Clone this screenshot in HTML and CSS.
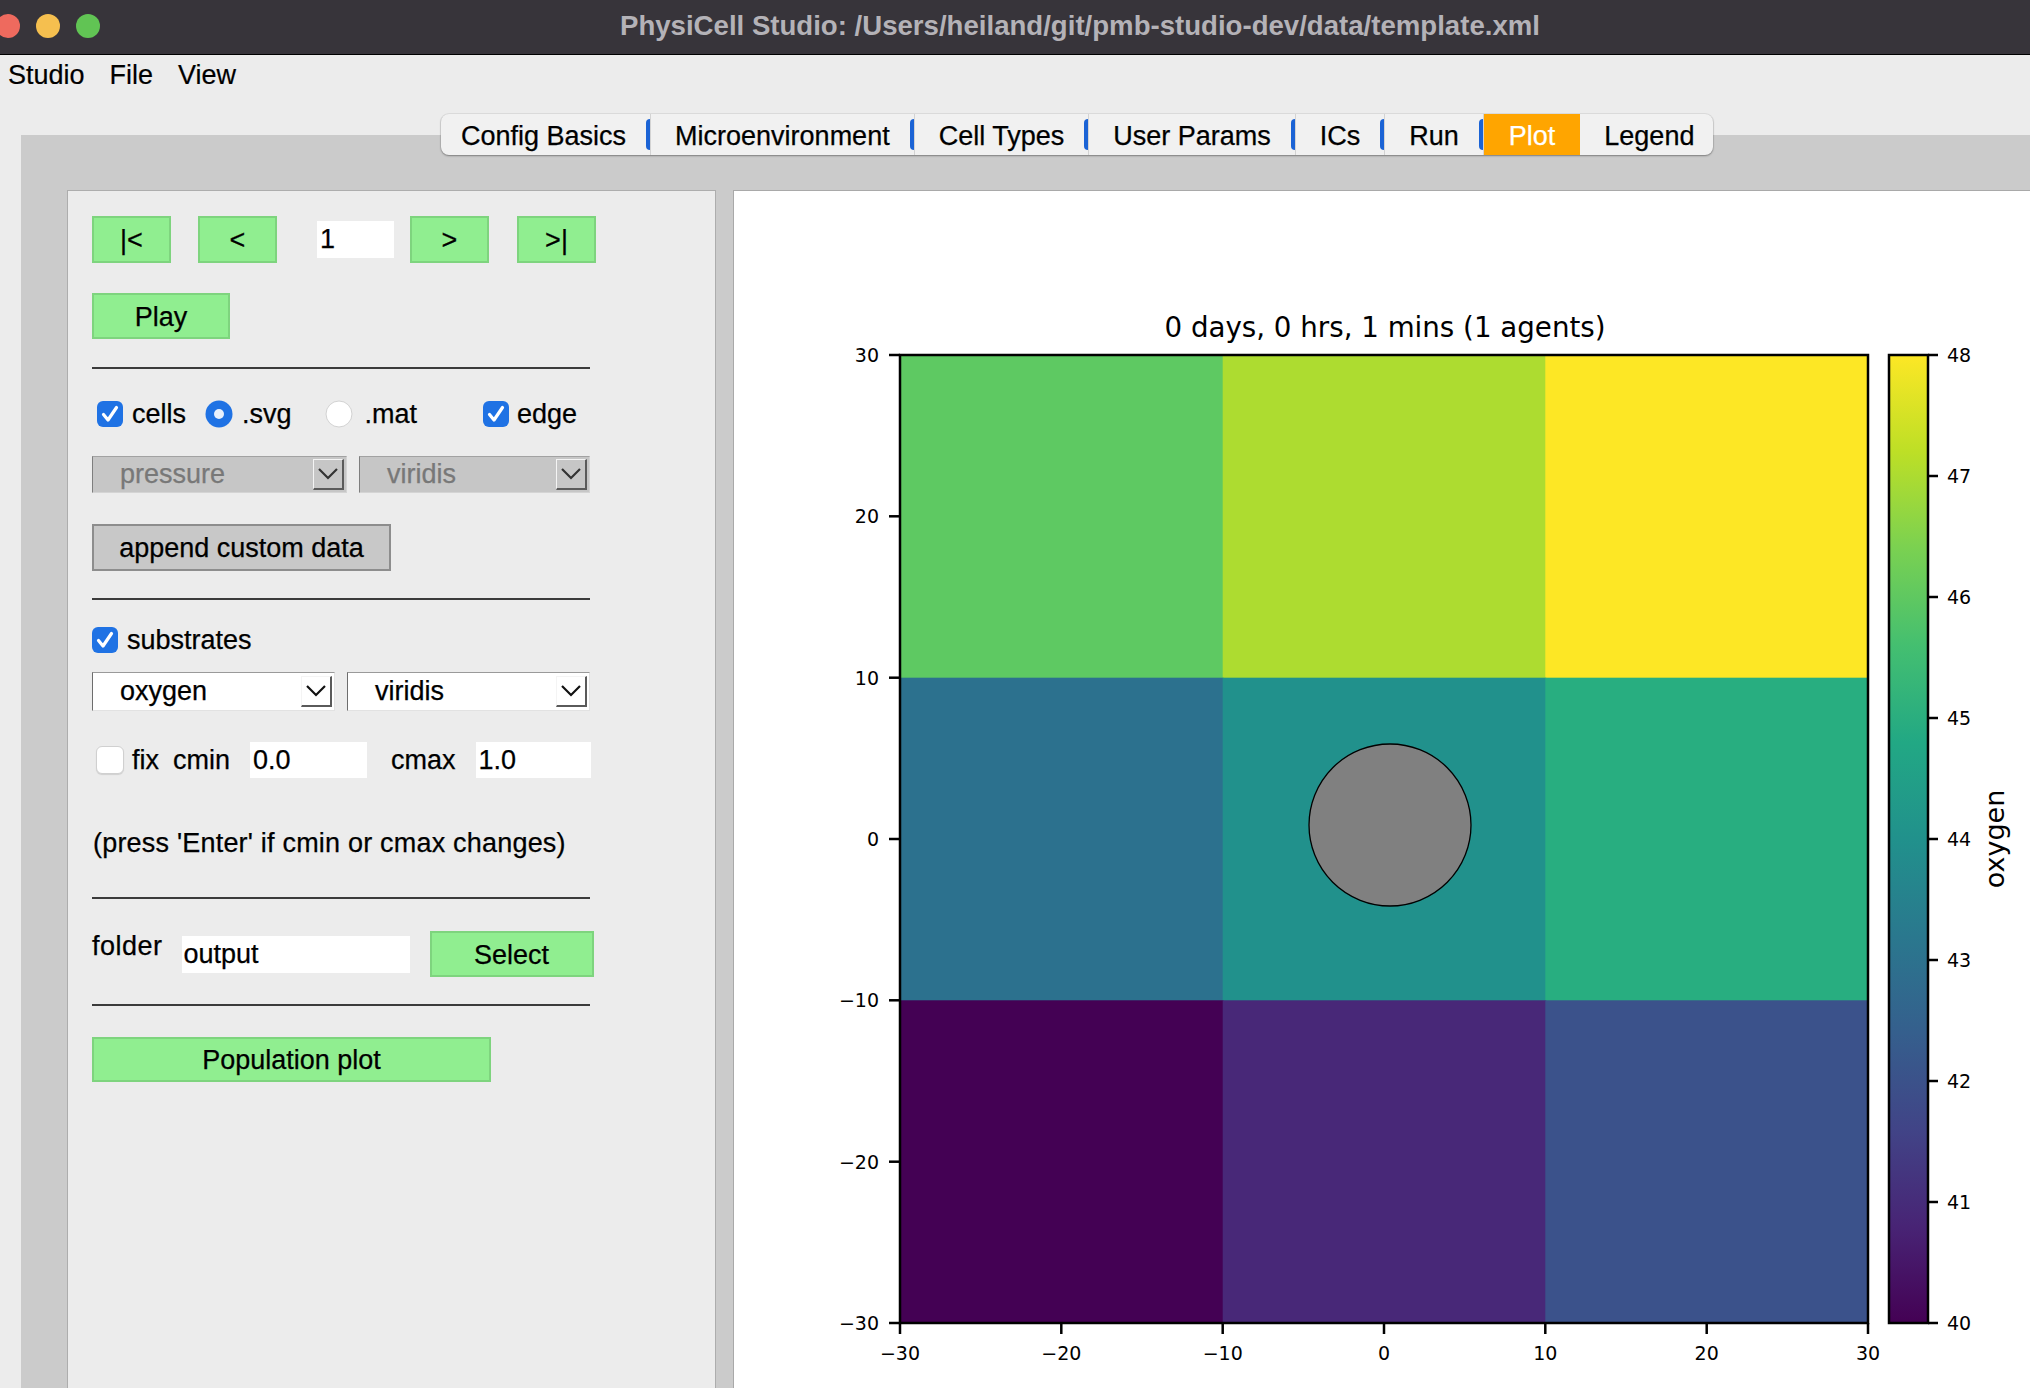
FILE: index.html
```html
<!DOCTYPE html>
<html>
<head>
<meta charset="utf-8">
<title>PhysiCell Studio</title>
<link rel="stylesheet" href="styles.css">
</head>
<body>
<div class="titlebar">
  <span class="light red"></span><span class="light yellow"></span><span class="light green"></span>
  <span class="wintitle">PhysiCell Studio: /Users/heiland/git/pmb-studio-dev/data/template.xml</span>
</div>
<div class="menubar"><span>Studio</span><span>File</span><span>View</span></div>
<div class="tabwidget">
  <div class="tabbar">
    <div class="tab first blue">Config Basics</div>
    <div class="tab blue">Microenvironment</div>
    <div class="tab blue">Cell Types</div>
    <div class="tab blue">User Params</div>
    <div class="tab blue">ICs</div>
    <div class="tab blue">Run</div>
    <div class="tab active">Plot</div>
    <div class="tab last">Legend</div>
  </div>
  <div class="pane">
    <div class="controls">
      <div class="row nav">
        <div class="gbtn navbtn">|&lt;</div>
        <div class="gbtn navbtn nb2">&lt;</div>
        <div class="field navfield">1</div>
        <div class="gbtn navbtn nb3">&gt;</div>
        <div class="gbtn navbtn nb4">&gt;|</div>
      </div>
      <div class="gbtn playbtn">Play</div>
      <div class="rule r1"></div>
      <div class="row checks">
        <svg class="cb cb-cells" viewBox="0 0 26 26"><rect x="0" y="0" width="26" height="26" rx="6" fill="#1f72e4"/><path d="M6.5 13.5 L11 19 L19.5 6.5" stroke="#fff" stroke-width="3.2" fill="none" stroke-linecap="round" stroke-linejoin="round"/></svg>
        <span class="lbl l-cells">cells</span>
        <svg class="rb rb-svg" viewBox="0 0 28 28"><circle cx="14" cy="14" r="13.5" fill="#1f72e4"/><circle cx="14" cy="14" r="5" fill="#e8f0fc"/></svg>
        <span class="lbl l-svg">.svg</span>
        <svg class="rb rb-mat" viewBox="0 0 28 28"><circle cx="14" cy="14" r="13" fill="#fff" stroke="#d2d2d2" stroke-width="1"/></svg>
        <span class="lbl l-mat">.mat</span>
        <svg class="cb cb-edge" viewBox="0 0 26 26"><rect x="0" y="0" width="26" height="26" rx="6" fill="#1f72e4"/><path d="M6.5 13.5 L11 19 L19.5 6.5" stroke="#fff" stroke-width="3.2" fill="none" stroke-linecap="round" stroke-linejoin="round"/></svg>
        <span class="lbl l-edge">edge</span>
      </div>
      <div class="row combos c1">
        <div class="combo disabled w-pressure"><span>pressure</span><span class="arrow"><svg viewBox="0 0 22 14"><polyline points="2,2 11,11 20,2" fill="none" stroke="#333" stroke-width="2.2"/></svg></span></div>
        <div class="combo disabled w-viridis1"><span>viridis</span><span class="arrow"><svg viewBox="0 0 22 14"><polyline points="2,2 11,11 20,2" fill="none" stroke="#333" stroke-width="2.2"/></svg></span></div>
      </div>
      <div class="graybtn">append custom data</div>
      <div class="rule r2"></div>
      <div class="row subs">
        <svg class="cb" viewBox="0 0 26 26"><rect x="0" y="0" width="26" height="26" rx="6" fill="#1f72e4"/><path d="M6.5 13.5 L11 19 L19.5 6.5" stroke="#fff" stroke-width="3.2" fill="none" stroke-linecap="round" stroke-linejoin="round"/></svg>
        <span class="lbl l-subs">substrates</span>
      </div>
      <div class="row combos c2">
        <div class="combo w-half"><span>oxygen</span><span class="arrow"><svg viewBox="0 0 22 14"><polyline points="2,2 11,11 20,2" fill="none" stroke="#111" stroke-width="2.2"/></svg></span></div>
        <div class="combo w-half"><span>viridis</span><span class="arrow"><svg viewBox="0 0 22 14"><polyline points="2,2 11,11 20,2" fill="none" stroke="#111" stroke-width="2.2"/></svg></span></div>
      </div>
      <div class="row fixrow">
        <span class="ucb"></span>
        <span class="lbl l-fix">fix</span>
        <span class="lbl l-cmin">cmin</span>
        <div class="field cfield f-cmin">0.0</div>
        <span class="lbl l-cmax">cmax</span>
        <div class="field cfield f-cmax">1.0</div>
      </div>
      <div class="note">(press 'Enter' if cmin or cmax changes)</div>
      <div class="rule r3"></div>
      <div class="row folder">
        <span class="lbl l-folder">folder</span>
        <div class="field ofield">output</div>
        <div class="gbtn selbtn">Select</div>
      </div>
      <div class="rule r4"></div>
      <div class="gbtn popbtn">Population plot</div>
    </div>
    <div class="plotpanel">
      <svg class="plot" width="1296" height="1197" viewBox="734 191 1296 1197">
        <defs>
          <linearGradient id="vir" x1="0" y1="1" x2="0" y2="0">
            <stop offset="0" stop-color="#440154"/>
            <stop offset="0.1" stop-color="#482475"/>
            <stop offset="0.2" stop-color="#414487"/>
            <stop offset="0.3" stop-color="#355f8d"/>
            <stop offset="0.4" stop-color="#2a788e"/>
            <stop offset="0.5" stop-color="#21918c"/>
            <stop offset="0.6" stop-color="#22a884"/>
            <stop offset="0.7" stop-color="#44bf70"/>
            <stop offset="0.8" stop-color="#7ad151"/>
            <stop offset="0.9" stop-color="#bddf26"/>
            <stop offset="1" stop-color="#fde725"/>
          </linearGradient>
        </defs>
        <text class="ptitle" x="1385" y="337" text-anchor="middle">0 days, 0 hrs, 1 mins (1 agents)</text>
        <rect x="900" y="355" width="323.5" height="323.5" fill="#5ec962"/>
        <rect x="1222.7" y="355" width="323.5" height="323.5" fill="#addc30"/>
        <rect x="1545.3" y="355" width="322.7" height="323.5" fill="#fde725"/>
        <rect x="900" y="677.7" width="323.5" height="323.5" fill="#2c718e"/>
        <rect x="1222.7" y="677.7" width="323.5" height="323.5" fill="#21918c"/>
        <rect x="1545.3" y="677.7" width="322.7" height="323.5" fill="#28ae80"/>
        <rect x="900" y="1000.3" width="323.5" height="322.7" fill="#440154"/>
        <rect x="1222.7" y="1000.3" width="323.5" height="322.7" fill="#482878"/>
        <rect x="1545.3" y="1000.3" width="322.7" height="322.7" fill="#3b528b"/>
        <circle cx="1390" cy="825" r="81" fill="#808080" stroke="#000" stroke-width="1.3"/>
        <rect x="900" y="355" width="968" height="968" fill="none" stroke="#000" stroke-width="2.5"/>
        <g stroke="#000" stroke-width="2.5">
          <line x1="889" y1="355" x2="900" y2="355"/>
          <line x1="889" y1="516.3" x2="900" y2="516.3"/>
          <line x1="889" y1="677.7" x2="900" y2="677.7"/>
          <line x1="889" y1="839" x2="900" y2="839"/>
          <line x1="889" y1="1000.3" x2="900" y2="1000.3"/>
          <line x1="889" y1="1161.7" x2="900" y2="1161.7"/>
          <line x1="889" y1="1323" x2="900" y2="1323"/>
          <line x1="900" y1="1323" x2="900" y2="1334"/>
          <line x1="1061.3" y1="1323" x2="1061.3" y2="1334"/>
          <line x1="1222.7" y1="1323" x2="1222.7" y2="1334"/>
          <line x1="1384" y1="1323" x2="1384" y2="1334"/>
          <line x1="1545.3" y1="1323" x2="1545.3" y2="1334"/>
          <line x1="1706.7" y1="1323" x2="1706.7" y2="1334"/>
          <line x1="1868" y1="1323" x2="1868" y2="1334"/>
        </g>
        <g class="tick" text-anchor="end">
          <text x="879" y="362">30</text>
          <text x="879" y="523">20</text>
          <text x="879" y="684.5">10</text>
          <text x="879" y="846">0</text>
          <text x="879" y="1007">−10</text>
          <text x="879" y="1168.5">−20</text>
          <text x="879" y="1330">−30</text>
        </g>
        <g class="tick" text-anchor="middle">
          <text x="900" y="1360">−30</text>
          <text x="1061.3" y="1360">−20</text>
          <text x="1222.7" y="1360">−10</text>
          <text x="1384" y="1360">0</text>
          <text x="1545.3" y="1360">10</text>
          <text x="1706.7" y="1360">20</text>
          <text x="1868" y="1360">30</text>
        </g>
        <rect x="1889" y="355" width="39" height="968" fill="url(#vir)" stroke="#000" stroke-width="2.5"/>
        <g stroke="#000" stroke-width="2.5">
          <line x1="1928" y1="355" x2="1938" y2="355"/>
          <line x1="1928" y1="476" x2="1938" y2="476"/>
          <line x1="1928" y1="597" x2="1938" y2="597"/>
          <line x1="1928" y1="718" x2="1938" y2="718"/>
          <line x1="1928" y1="839" x2="1938" y2="839"/>
          <line x1="1928" y1="960" x2="1938" y2="960"/>
          <line x1="1928" y1="1081" x2="1938" y2="1081"/>
          <line x1="1928" y1="1202" x2="1938" y2="1202"/>
          <line x1="1928" y1="1323" x2="1938" y2="1323"/>
        </g>
        <g class="tick">
          <text x="1947" y="362">48</text>
          <text x="1947" y="483">47</text>
          <text x="1947" y="604">46</text>
          <text x="1947" y="725">45</text>
          <text x="1947" y="846">44</text>
          <text x="1947" y="967">43</text>
          <text x="1947" y="1088">42</text>
          <text x="1947" y="1209">41</text>
          <text x="1947" y="1330">40</text>
        </g>
        <text class="cblabel" transform="translate(2004 839) rotate(-90)" text-anchor="middle">oxygen</text>
      </svg>
    </div>
  </div>
</div>
</body>
</html>
```
FILE: styles.css
```css
* { box-sizing: border-box; }
html, body { margin: 0; height: 100%; overflow: hidden; }
body {
  background: #ececec;
  font-family: "Liberation Sans", Arial, sans-serif;
  font-size: 27px;
  color: #000;
  display: flex;
  flex-direction: column;
}

/* window title bar */
.titlebar {
  flex: none;
  height: 55px;
  background: #37343a;
  border-bottom: 1px solid #000;
  display: flex;
  align-items: center;
}
.light { flex: none; width: 24px; height: 24px; border-radius: 50%; margin-right: 16px; margin-top: -2px; }
.red { background: #ee6a5e; margin-left: -4px; }
.yellow { background: #f5bf4f; }
.green { background: #61c454; }
.wintitle { margin-left: 504px; margin-top: -2px; color: #b4b2b7; font-weight: bold; font-size: 27.6px; white-space: nowrap; }

/* menu bar */
.menubar {
  flex: none;
  height: 40px;
  display: flex;
  align-items: center;
  gap: 25px;
  padding-left: 8px;
  -webkit-text-stroke: 0.2px #000;
}

/* tab widget */
.tabwidget {
  flex: 1;
  display: flex;
  flex-direction: column;
  margin-top: 19px;
  margin-left: 21px;
  min-height: 0;
}
.tabbar {
  align-self: flex-start;
  margin-left: 420px;
  height: 41px;
  display: flex;
  background: #f1f1f1;
  border-radius: 8px;
  box-shadow: 0 1px 2px rgba(0,0,0,0.35), 0 0 0 1px rgba(0,0,0,0.06);
  position: relative;
  z-index: 1;
  white-space: nowrap;
}
.tab {
  display: flex;
  align-items: center;
  padding: 3px 24px 0;
  border-right: 1px solid #d3d3d3;
  position: relative;
  -webkit-text-stroke: 0.25px currentColor;
}
.tab.first { padding-left: 20px; }
.tab.blue::after {
  content: "";
  position: absolute;
  right: 0;
  top: 5px;
  width: 4px;
  height: 31px;
  background: #1b63d5;
  border-radius: 4px 0 0 4px;
}
.tab.active { background: #ffa500; color: #fff; padding: 3px 25px 0; border-right: none; }
.tab.last { padding-right: 19px; border-right: none; }

.pane {
  flex: 1;
  margin-top: -20px;
  background: #cbcbcb;
  display: flex;
  padding: 55px 0 0 46px;
  min-height: 0;
}

/* left controls panel */
.controls {
  flex: none;
  width: 649px;
  background: #ececec;
  border: 1px solid #adadad;
  border-bottom: none;
  padding: 25px 0 0 24px;
  display: flex;
  flex-direction: column;
  align-items: flex-start;
  -webkit-text-stroke: 0.25px currentColor;
}
.row { display: flex; align-items: center; }
.gbtn {
  background: #90ee90;
  border: 2px solid #7ed47e;
  display: flex;
  align-items: center;
  justify-content: center;
  padding-top: 2px;
}
.field {
  background: #fff;
  display: flex;
  align-items: center;
  padding-left: 3px;
}
.nav { height: 47px; }
.navbtn { width: 79px; height: 47px; }
.nb2 { margin-left: 27px; }
.navfield { margin-left: 40px; width: 77px; height: 37px; }
.nb3 { margin-left: 16px; }
.nb4 { margin-left: 28px; }
.playbtn { width: 138px; height: 46px; margin-top: 30px; }

.rule { width: 498px; height: 2px; background: #3b3b3b; }
.r1 { margin-top: 28px; }
.r2 { margin-top: 27px; }
.r3 { margin-top: 35px; }
.r4 { margin-top: 27px; }

.checks { height: 40px; margin-top: 25px; }
.cb { width: 26px; height: 26px; flex: none; }
.rb { width: 28px; height: 28px; flex: none; }
.cb-cells { margin-left: 5px; }
.l-cells { margin-left: 9px; }
.rb-svg { margin-left: 19px; }
.l-svg { margin-left: 9px; }
.rb-mat { margin-left: 33px; }
.l-mat { margin-left: 12px; }
.cb-edge { margin-left: 66px; }
.l-edge { margin-left: 8px; }

.combos { gap: 12px; }
.c1 { margin-top: 22px; height: 37px; }
.c2 { margin-top: 12px; height: 39px; }
.combo {
  height: 100%;
  display: flex;
  align-items: center;
  justify-content: space-between;
  padding-left: 27px;
  padding-right: 2px;
  background: #fff;
  border-left: 1px solid #6d6d6d;
  border-top: 1px solid #9a9a9a;
  border-right: 1px solid #e2e2e2;
  border-bottom: 1px solid #e2e2e2;
}
.combo.disabled {
  background: #c6c6c6;
  color: #787878;
  border-left-color: #7e7e7e;
  border-top-color: #a2a2a2;
  border-right-color: #d4d4d4;
  border-bottom-color: #d4d4d4;
}
.w-pressure { width: 255px; }
.w-viridis1 { width: 231px; }
.w-half { width: 243px; }
.arrow {
  width: 31px;
  height: 31px;
  display: flex;
  align-items: center;
  justify-content: center;
  border-left: 1px solid #f4f4f4;
  border-top: 1px solid #f4f4f4;
  border-right: 2px solid #5a5a5a;
  border-bottom: 2px solid #5a5a5a;
}
.arrow svg { width: 22px; height: 14px; }

.graybtn {
  margin-top: 31px;
  width: 299px;
  height: 47px;
  background: #c8c8c8;
  border: 2px solid #8d8d8d;
  display: flex;
  align-items: center;
  justify-content: center;
  padding-top: 2px;
}

.subs { margin-top: 20px; height: 40px; }
.l-subs { margin-left: 9px; }

.fixrow { margin-top: 31px; height: 36px; }
.ucb {
  width: 28px; height: 28px;
  margin-left: 4px;
  background: #fff;
  border: 1px solid #d0d0d0;
  border-radius: 6px;
  box-shadow: 0 1px 1px rgba(0,0,0,0.12);
}
.l-fix { margin-left: 8px; }
.l-cmin { margin-left: 14px; }
.cfield { width: 117px; height: 36px; }
.f-cmin { margin-left: 20px; }
.l-cmax { margin-left: 24px; }
.f-cmax { margin-left: 20px; width: 115px; }

.note { margin-top: 46px; line-height: 38px; margin-left: 1px; letter-spacing: 0.2px; }

.folder { margin-top: 32px; height: 46px; }
.l-folder { align-self: flex-start; line-height: 30px; letter-spacing: 0.5px; }
.ofield { margin-left: 19px; width: 228px; height: 37px; padding-left: 2px; }
.selbtn { margin-left: 20px; width: 164px; height: 46px; }

.popbtn { margin-top: 31px; width: 399px; height: 45px; }

/* plot panel */
.plotpanel {
  flex: 1;
  margin-left: 17px;
  background: #fff;
  border-top: 1px solid #a9a9a9;
  border-left: 1px solid #a9a9a9;
  overflow: hidden;
}
.plot { display: block; }
.ptitle { font-family: "DejaVu Sans", sans-serif; font-size: 27.7px; fill: #000; }
.tick text { font-family: "DejaVu Sans", sans-serif; font-size: 19px; fill: #000; }
.cblabel { font-family: "DejaVu Sans", sans-serif; font-size: 27px; fill: #000; }
```
